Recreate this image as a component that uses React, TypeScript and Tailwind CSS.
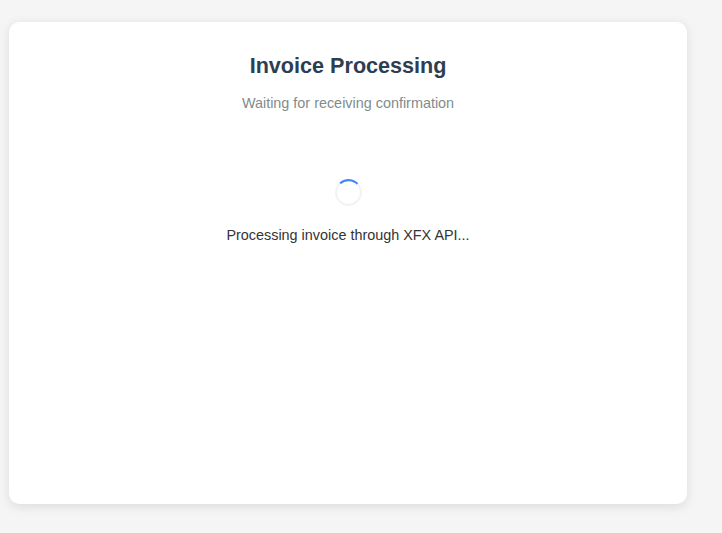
export default function App() {
  return (
    <div className="h-[533px] overflow-hidden bg-[#f5f5f5] pt-[22px] pl-[9px] font-['Liberation_Sans',Arial,sans-serif]">
      <main className="flex h-[482px] w-[678px] flex-col items-center rounded-[10.8px] bg-white pt-[29px] shadow-[0_2.7px_11px_rgba(0,0,0,0.1)]">
        <h1 className="pl-[0.2px] text-[21.6px] leading-[29px] font-bold text-[#2c3e50]">Invoice Processing</h1>
        <p className="mt-[14px] text-[14.4px] leading-[18px] text-[#7f8c8d]">Waiting for receiving confirmation</p>
        <div className="mt-[67px] ml-px size-[27px] p-px">
          <div className="size-[25px] rotate-2 scale-[1.08] rounded-full border-2 border-[#f3f3f3] border-t-[#4688fa]" />
        </div>
        <p className="mt-[20px] text-[14.4px] leading-[18px] text-[#333333]">Processing invoice through XFX API...</p>
      </main>
    </div>
  );
}
